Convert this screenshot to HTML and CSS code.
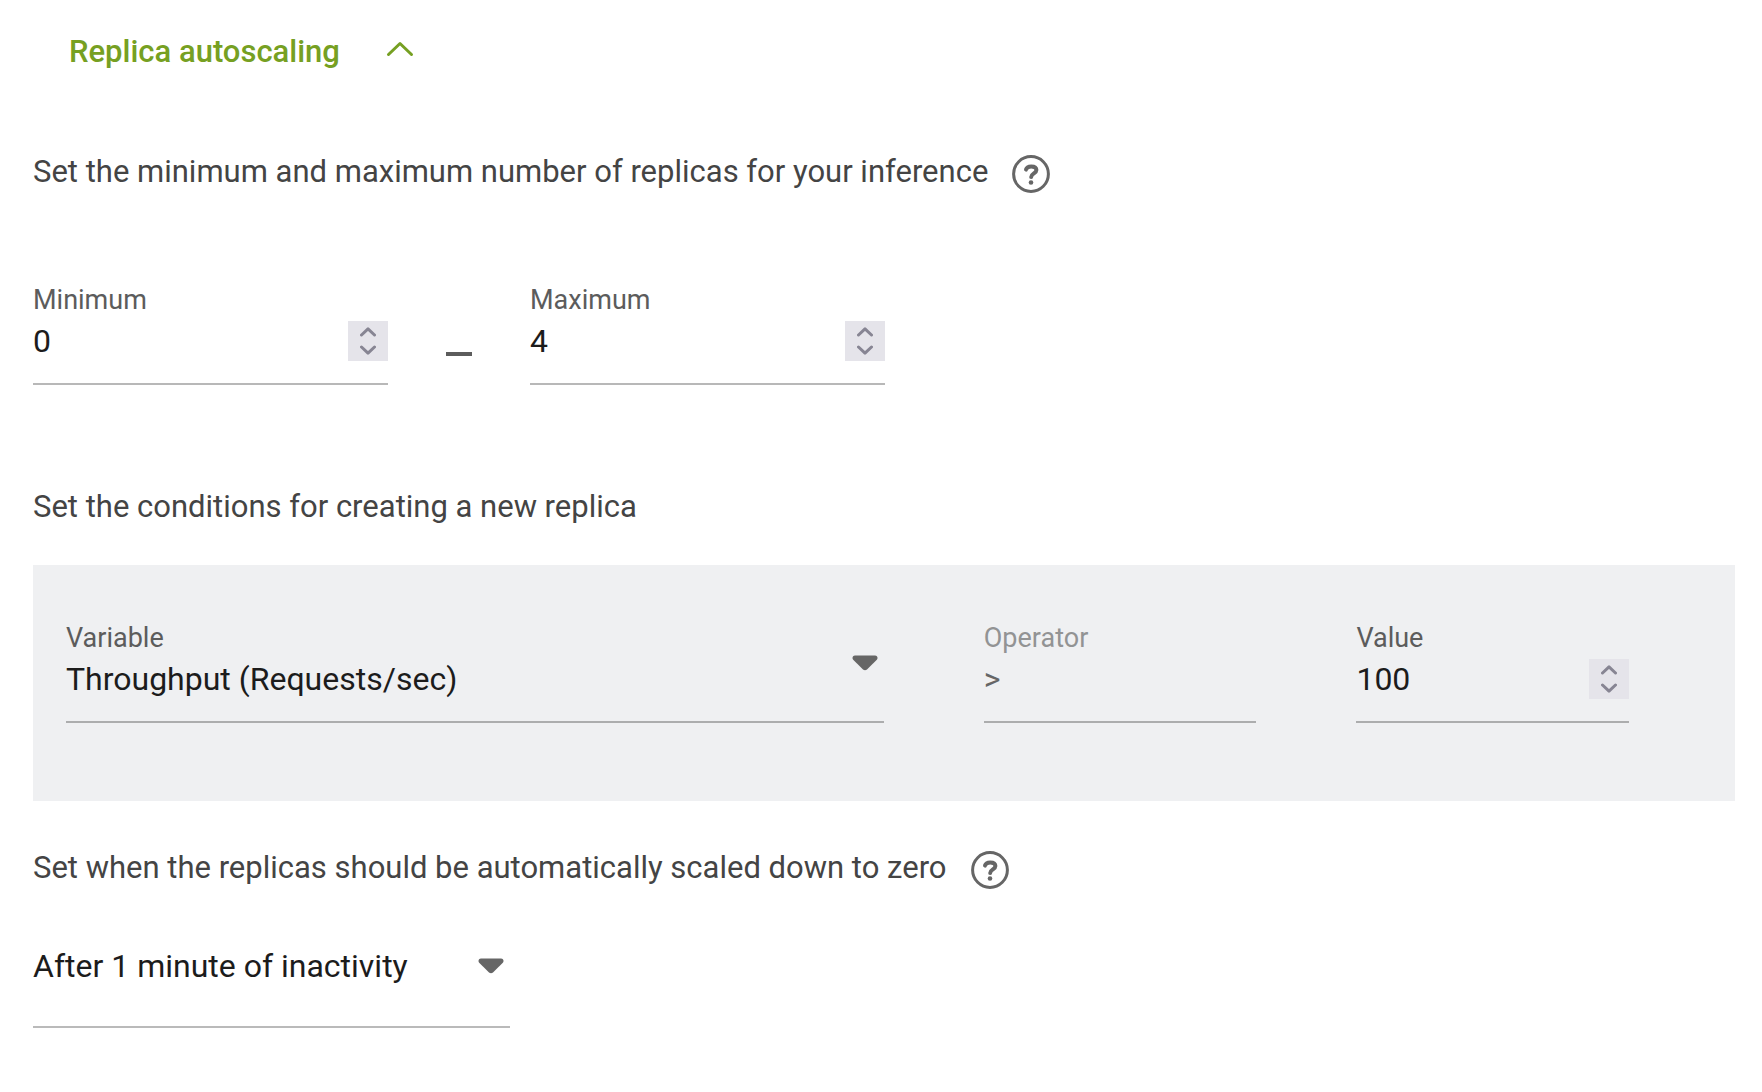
FILE: index.html
```html
<!DOCTYPE html>
<html lang="en">
<head>
<meta charset="utf-8">
<meta name="viewport" content="width=device-width, initial-scale=1">
<title>Replica autoscaling</title>
<link rel="stylesheet" href="styles.css">
</head>
<body>
<form class="autoscaling">
  <button type="button" class="section-toggle" aria-expanded="true">
    Replica autoscaling
    <svg class="chevron" width="28" height="16" viewBox="0 0 28 16" aria-hidden="true">
      <path d="M2.5 13.5 L14 2.5 L25.5 13.5"/>
    </svg>
  </button>

  <div class="heading">
    <p>Set the minimum and maximum number of replicas for your inference</p>
    <button type="button" class="help" aria-label="Help about replicas">
      <svg width="38" height="38" viewBox="0 0 38 38" aria-hidden="true">
        <circle class="ring" cx="19" cy="19" r="17.4"/>
        <path class="hook" d="M14 14.6 C14.6 12.2 16.5 11.4 19.2 11.4 C22.4 11.4 24.4 12.7 24.4 15 C24.4 18.4 19.4 18.4 19.2 22"/>
        <circle class="dot" cx="19" cy="27.5" r="2.3"/>
      </svg>
    </button>
  </div>

  <div class="range">
    <div class="field">
      <label for="minimum">Minimum</label>
      <div class="number">
        <input id="minimum" type="number" min="0" value="0">
        <div class="stepper">
          <button type="button" data-step="up" aria-label="Increase minimum"><svg width="16" height="10" viewBox="0 0 16 10"><path d="M1.5 8 L8 1.8 L14.5 8"/></svg></button>
          <button type="button" data-step="down" aria-label="Decrease minimum"><svg width="16" height="10" viewBox="0 0 16 10"><path d="M1.5 2 L8 8.2 L14.5 2"/></svg></button>
        </div>
      </div>
    </div>
    <span class="dash"></span>
    <div class="field">
      <label for="maximum">Maximum</label>
      <div class="number">
        <input id="maximum" type="number" min="0" value="4">
        <div class="stepper">
          <button type="button" data-step="up" aria-label="Increase maximum"><svg width="16" height="10" viewBox="0 0 16 10"><path d="M1.5 8 L8 1.8 L14.5 8"/></svg></button>
          <button type="button" data-step="down" aria-label="Decrease maximum"><svg width="16" height="10" viewBox="0 0 16 10"><path d="M1.5 2 L8 8.2 L14.5 2"/></svg></button>
        </div>
      </div>
    </div>
  </div>

  <div class="heading">
    <p>Set the conditions for creating a new replica</p>
  </div>

  <div class="conditions">
    <div class="field field-select">
      <label for="variable">Variable</label>
      <select id="variable">
        <option>Throughput (Requests/sec)</option>
        <option>Latency (msec)</option>
        <option>Concurrency (Requests)</option>
      </select>
      <svg class="arrow" width="26" height="16" viewBox="0 0 26 16" aria-hidden="true"><path d="M3 0.5 H23 Q25.5 0.5 25.5 3 Q25.5 4 24.8 4.7 L15 14.4 Q13 16 11 14.4 L1.2 4.7 Q0.5 4 0.5 3 Q0.5 0.5 3 0.5 Z"/></svg>
    </div>
    <div class="field field-disabled">
      <label for="operator">Operator</label>
      <input id="operator" type="text" value="&gt;" disabled>
    </div>
    <div class="field">
      <label for="value">Value</label>
      <div class="number">
        <input id="value" type="number" min="0" value="100">
        <div class="stepper">
          <button type="button" data-step="up" aria-label="Increase value"><svg width="16" height="10" viewBox="0 0 16 10"><path d="M1.5 8 L8 1.8 L14.5 8"/></svg></button>
          <button type="button" data-step="down" aria-label="Decrease value"><svg width="16" height="10" viewBox="0 0 16 10"><path d="M1.5 2 L8 8.2 L14.5 2"/></svg></button>
        </div>
      </div>
    </div>
  </div>

  <div class="heading">
    <label for="scale-down">Set when the replicas should be automatically scaled down to zero</label>
    <button type="button" class="help" aria-label="Help about scaling to zero">
      <svg width="38" height="38" viewBox="0 0 38 38" aria-hidden="true">
        <circle class="ring" cx="19" cy="19" r="17.4"/>
        <path class="hook" d="M14 14.6 C14.6 12.2 16.5 11.4 19.2 11.4 C22.4 11.4 24.4 12.7 24.4 15 C24.4 18.4 19.4 18.4 19.2 22"/>
        <circle class="dot" cx="19" cy="27.5" r="2.3"/>
      </svg>
    </button>
  </div>

  <div class="scale-down">
    <select id="scale-down">
      <option>After 1 minute of inactivity</option>
      <option>After 5 minutes of inactivity</option>
      <option>Never</option>
    </select>
    <svg class="arrow" width="26" height="16" viewBox="0 0 26 16" aria-hidden="true"><path d="M3 0.5 H23 Q25.5 0.5 25.5 3 Q25.5 4 24.8 4.7 L15 14.4 Q13 16 11 14.4 L1.2 4.7 Q0.5 4 0.5 3 Q0.5 0.5 3 0.5 Z"/></svg>
  </div>
</form>
<script>
  document.querySelectorAll(".stepper button").forEach(function (button) {
    button.addEventListener("click", function () {
      const input = button.closest(".number").querySelector("input");
      if (button.dataset.step === "up") {
        input.stepUp();
      } else {
        input.stepDown();
      }
    });
  });
</script>
</body>
</html>
```
FILE: styles.css
```css
* {
    box-sizing: border-box;
}
body {
    margin: 0;
    background-color: #fff;
    color: #444;
    font-family: Roboto, "Liberation Sans", sans-serif;
    font-size: 31px;
    line-height: 40px;
}
button, input, select {
    margin: 0;
    padding: 0;
    border: none;
    border-radius: 0;
    background: none;
    font: inherit;
}
button, select {
    cursor: pointer;
}
svg {
    display: block;
    fill: none;
}
.autoscaling {
    padding: 32px 27px 64px 33px;
}

/* section title */
.section-toggle {
    display: flex;
    align-items: center;
    gap: 46px;
    margin-left: 36px;
    color: #76a022;
    font-weight: 500;
}
.chevron {
    margin-bottom: 6px;
}
.chevron path {
    stroke: #76a022;
    stroke-width: 3;
    stroke-linecap: round;
    stroke-linejoin: round;
}

/* headings */
.heading {
    display: flex;
    gap: 24px;
    margin-top: 80px;
}
.heading p {
    margin: 0;
}
.help {
    height: 38px;
    margin-top: 3px;
}
.help .ring {
    stroke: #666;
    stroke-width: 3;
}
.help .hook {
    stroke: #666;
    stroke-width: 4;
    stroke-linecap: round;
}
.help .dot {
    fill: #666;
}

/* fields */
.field {
    display: grid;
    grid-template-rows: 32px 40px;
    row-gap: 5px;
    padding-bottom: 22px;
    border-bottom: 2px solid rgba(0, 0, 0, 0.28);
}
.field label {
    color: #5c5c5c;
    font-size: 27px;
    line-height: 32px;
}
input, select {
    width: 100%;
    min-width: 0;
    height: 40px;
    appearance: none;
    color: #1c1c1c;
    font-size: 32px;
    outline: none;
}
.number {
    display: flex;
}
.number input {
    flex: 1;
    appearance: textfield;
}
.number input::-webkit-inner-spin-button {
    display: none;
}
.stepper {
    display: flex;
    flex-direction: column;
    width: 40px;
    height: 40px;
    padding: 2px 0;
    background-color: #e5e4ea;
}
.stepper button {
    display: flex;
    flex: 1;
    justify-content: center;
    align-items: center;
}
.stepper path {
    stroke: #878593;
    stroke-width: 3;
    stroke-linecap: round;
    stroke-linejoin: round;
}
.arrow path {
    fill: #666;
}
.field-select .arrow {
    grid-area: 1 / 1 / 3 / 2;
    align-self: end;
    justify-self: end;
    margin: 0 6px 28px 0;
    pointer-events: none;
}
.field-select label {
    grid-area: 1 / 1;
}
.field-select select {
    grid-area: 2 / 1;
}
.field-disabled label {
    color: #929394;
}
.field-disabled input {
    color: #666;
}

/* minimum and maximum */
.range {
    display: flex;
    gap: 58px;
    margin-top: 91px;
    margin-bottom: 102px;
}
.range .field {
    width: 355px;
}
.dash {
    width: 26px;
    height: 4px;
    margin-top: 68px;
    background-color: #5c5c5c;
}
.range + .heading {
    margin-top: 0;
}

/* conditions panel */
.conditions {
    display: grid;
    grid-template-columns: 3fr 1fr 1fr;
    gap: 100px;
    margin-top: 38px;
    padding: 57px 106px 78px 33px;
    background-color: #eff0f2;
}
.conditions + .heading {
    margin-top: 47px;
}

/* scale down */
.scale-down {
    display: grid;
    align-items: center;
    width: 477px;
    margin-top: 57px;
    padding-bottom: 40px;
    border-bottom: 2px solid #bababa;
}
.scale-down select, .scale-down .arrow {
    grid-area: 1 / 1;
}
.scale-down .arrow {
    justify-self: end;
    margin-right: 6px;
    pointer-events: none;
}
```
